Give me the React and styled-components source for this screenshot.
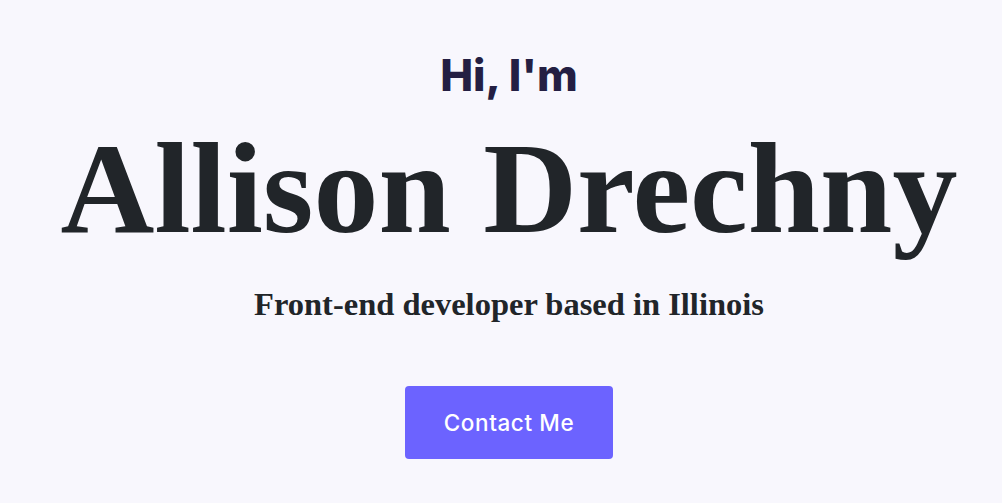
import styled, { createGlobalStyle } from 'styled-components'

const GlobalStyle = createGlobalStyle`
  html, body {
    margin: 0;
    padding: 0;
    background: #f8f7fd;
  }
`

const Hero = styled.section`
  display: flex;
  flex-direction: column;
  align-items: center;
  padding: 46px 0 0 16px;
  height: 503px;
  box-sizing: border-box;
`

const Greeting = styled.h3`
  margin: 0;
  font-family: Inter, "Noto Sans", sans-serif;
  font-weight: 800;
  font-size: 44px;
  line-height: 58px;
  color: #241f43;
`

const Name = styled.h1`
  margin: 0;
  margin-top: 14px;
  font-family: "Liberation Serif", "DejaVu Serif", serif;
  font-weight: 700;
  font-size: 130px;
  line-height: 140px;
  color: #212529;
`

const Tagline = styled.p`
  margin: 0;
  margin-top: 24px;
  font-family: "Liberation Serif", "DejaVu Serif", serif;
  font-weight: 700;
  font-size: 32.5px;
  line-height: 44px;
  color: #212529;
`

const ContactButton = styled.button`
  margin-top: 60px;
  width: 208px;
  height: 73px;
  border: none;
  border-radius: 4px;
  background: #6c63ff;
  color: #fff;
  font-family: Inter, "Noto Sans", sans-serif;
  font-weight: 500;
  font-size: 22.5px;
  letter-spacing: 0.6px;
  cursor: pointer;
`

export default function App() {
  return (
    <>
      <GlobalStyle />
      <Hero>
        <Greeting>Hi, I'm</Greeting>
        <Name>Allison Drechny</Name>
        <Tagline>Front-end developer based in Illinois</Tagline>
        <ContactButton>Contact Me</ContactButton>
      </Hero>
    </>
  )
}
